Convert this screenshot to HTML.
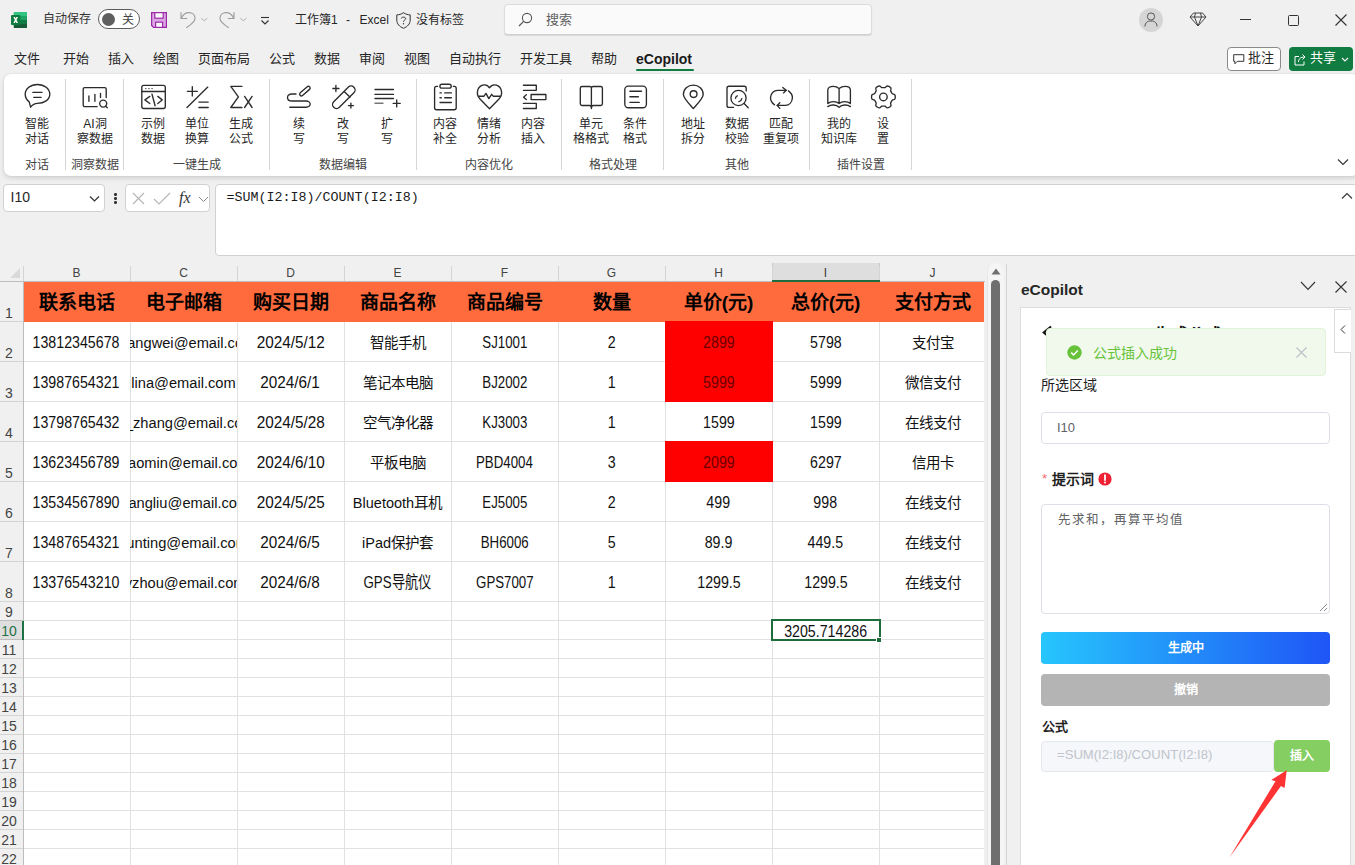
<!DOCTYPE html><html lang="zh-CN"><head><meta charset="utf-8"><title>Excel</title><style>
*{margin:0;padding:0;box-sizing:border-box}
html,body{width:1355px;height:865px;overflow:hidden;background:#f0f0f0;font-family:"Liberation Sans",sans-serif;color:#262626}
.ab{position:absolute}
.t{position:absolute;white-space:nowrap;line-height:1}
svg{position:absolute;overflow:visible}
.menu{position:absolute;top:52px;font-size:13px;line-height:14px;color:#262626;white-space:nowrap}
.rb{position:absolute;top:0;width:44px;text-align:center}
.rl{position:absolute;top:116.5px;width:60px;font-size:12px;line-height:15px;color:#262626;text-align:center;white-space:nowrap}
.gl{position:absolute;top:158.5px;font-size:12px;line-height:13px;color:#444;text-align:center;white-space:nowrap}
.sep{position:absolute;top:79px;width:1px;height:91px;background:#d6d6d6}
.ch{position:absolute;top:265px;height:16px;font-size:12px;line-height:16px;color:#444;text-align:center}
.chs{position:absolute;top:266px;width:1px;height:15px;background:#d4d4d4}
.rh{position:absolute;left:0;width:23px;font-size:14px;color:#444;text-align:center;line-height:14px}
.cell{position:absolute;display:flex;justify-content:center;white-space:nowrap;overflow:hidden;font-size:14.67px;color:#111}
.num,.dt,.cd{font-size:17px}
.cell span{display:inline-block;transform:scaleX(0.835)}
.dt span{transform:scaleX(0.9)}
.cd span{transform:scaleX(0.78)}
.hd{position:absolute;text-align:center;white-space:nowrap;font-size:19px;font-weight:bold;color:#000;line-height:41.5px;top:281.5px;height:40px}
</style></head><body>
<svg style="left:11px;top:12px" width="16" height="16" viewBox="0 0 17 16" preserveAspectRatio="none">
<rect x="3" y="0" width="14" height="16" rx="1" fill="#21a366"/>
<rect x="3" y="0" width="14" height="4" fill="#33c481"/>
<rect x="3" y="8" width="14" height="4" fill="#107c41"/>
<rect x="3" y="12" width="14" height="4" rx="0.5" fill="#185c37"/>
<rect x="0" y="3" width="10" height="10" rx="1" fill="#107c41"/>
<path d="M2.6 5 L4.2 5 L5 6.6 L5.8 5 L7.4 5 L5.9 8 L7.4 11 L5.8 11 L5 9.4 L4.2 11 L2.6 11 L4.1 8 Z" fill="#fff"/>
</svg>
<div class="t" style="left:43px;top:13px;font-size:12px;line-height:13px;color:#333">自动保存</div>
<div class="ab" style="left:98px;top:9px;width:42px;height:20px;border:1px solid #5c5c5c;border-radius:10px;background:#fff"></div>
<div class="ab" style="left:101.5px;top:12.5px;width:13px;height:13px;border-radius:50%;background:#5f5f5f"></div>
<div class="t" style="left:122px;top:13.5px;font-size:12px;line-height:13px;color:#444">关</div>
<svg style="left:151px;top:12px" width="16" height="16" viewBox="0 0 16 16">
<path d="M0.6 0.6 H15.4 V15.4 H2.6 L0.6 13.4 Z" fill="#dba6e3" stroke="#9c2aa8" stroke-width="1.2"/>
<rect x="3.8" y="0.6" width="8.4" height="5.6" fill="#f8f8f8" stroke="#9c2aa8" stroke-width="1.2"/>
<rect x="4.6" y="10.2" width="7" height="5.2" fill="#f8f8f8" stroke="#9c2aa8" stroke-width="1.2"/>
</svg>
<svg style="left:180px;top:12px" width="30" height="17" viewBox="0 0 30 17">
<path d="M1 0.3 V6.5 H7.2" stroke="#9c9c9c" stroke-width="1.1" fill="none"/>
<path d="M1.3 6.2 C3 2.5 6 0.6 9 0.6 C12.5 0.6 15 3 15 6.5 C15 9.5 12 12 6.3 15.8" stroke="#9c9c9c" stroke-width="1.1" fill="none"/>
<path d="M21.3 6.2 L24.3 8.8 L27.3 6.2" stroke="#b0b0b0" stroke-width="1" fill="none"/>
</svg>
<svg style="left:219px;top:12px" width="30" height="17" viewBox="0 0 30 17">
<path d="M15 0.3 V6.5 H8.8" stroke="#9c9c9c" stroke-width="1.1" fill="none"/>
<path d="M14.7 6.2 C13 2.5 10 0.6 7 0.6 C3.5 0.6 1 3 1 6.5 C1 9.5 4 12 9.7 15.8" stroke="#9c9c9c" stroke-width="1.1" fill="none"/>
<path d="M21.3 6.2 L24.3 8.8 L27.3 6.2" stroke="#b0b0b0" stroke-width="1" fill="none"/>
</svg>
<svg style="left:260px;top:16px" width="10" height="9" viewBox="0 0 10 9">
<path d="M1 1.5 H9" stroke="#333" stroke-width="1.1"/><path d="M1.5 4.5 L5 8 L8.5 4.5" stroke="#333" stroke-width="1.2" fill="none"/>
</svg>
<div class="t" style="left:295px;top:14px;font-size:12px;line-height:13px;color:#262626">工作簿1</div><div class="t" style="left:346px;top:14px;font-size:12px;line-height:13px;color:#262626">-</div><div class="t" style="left:359.5px;top:14px;font-size:12px;line-height:13px;color:#262626">Excel</div>
<svg style="left:396px;top:12px" width="15" height="17" viewBox="0 0 15 17">
<path d="M7.5 0.7 C5 2.3 3 2.8 0.8 2.9 V8 C0.8 12 3.5 14.6 7.5 16.3 C11.5 14.6 14.2 12 14.2 8 V2.9 C12 2.8 10 2.3 7.5 0.7 Z" fill="none" stroke="#333" stroke-width="1"/>
<path d="M5.3 6.3 C5.3 4.7 9.7 4.7 9.7 6.5 C9.7 8 7.5 8.1 7.5 9.8" fill="none" stroke="#333" stroke-width="1"/>
<circle cx="7.5" cy="11.8" r="0.7" fill="#333"/>
</svg>
<div class="t" style="left:416px;top:14px;font-size:12px;line-height:13px;color:#262626">没有标签</div>
<div class="ab" style="left:504.3px;top:4.3px;width:368px;height:31px;background:#fafafa;border:1px solid #dcdcdc;border-bottom-color:#cfcfcf;border-radius:4px;box-shadow:0 1px 1px rgba(0,0,0,0.10)"></div>
<svg style="left:518px;top:12px" width="15" height="15" viewBox="0 0 15 15">
<circle cx="9" cy="6" r="4.6" fill="none" stroke="#555" stroke-width="1.1"/><path d="M5.7 9.3 L1 14" stroke="#555" stroke-width="1.2"/>
</svg>
<div class="t" style="left:546px;top:12.5px;font-size:13px;line-height:14px;color:#616161">搜索</div>
<div class="ab" style="left:1139px;top:7.5px;width:24px;height:24px;border-radius:50%;background:#d5d5d5"></div>
<svg style="left:1143px;top:11px" width="16" height="17" viewBox="0 0 16 17">
<circle cx="8" cy="5.5" r="3.6" fill="none" stroke="#555" stroke-width="1"/>
<path d="M2 15.5 C2 11.5 4.5 10 8 10 C11.5 10 14 11.5 14 15.5" fill="none" stroke="#555" stroke-width="1"/>
</svg>
<svg style="left:1189px;top:12px" width="18" height="15" viewBox="0 0 18 15">
<path d="M4.5 1 H13.5 L17 5 L9 14 L1 5 Z M1 5 H17 M6.5 1 L5.5 5 L9 14 L12.5 5 L11.5 1" fill="none" stroke="#444" stroke-width="1"/>
</svg>
<div class="ab" style="left:1240px;top:19px;width:11px;height:1px;background:#333"></div>
<div class="ab" style="left:1288px;top:14.5px;width:11px;height:11px;border:1px solid #333;border-radius:1.5px"></div>
<svg style="left:1335px;top:14px" width="12" height="12" viewBox="0 0 12 12"><path d="M0.5 0.5 L11.5 11.5 M11.5 0.5 L0.5 11.5" stroke="#333" stroke-width="1.1"/></svg>
<div class="menu" style="left:14px">文件</div>
<div class="menu" style="left:63px">开始</div>
<div class="menu" style="left:108px">插入</div>
<div class="menu" style="left:153px">绘图</div>
<div class="menu" style="left:198px">页面布局</div>
<div class="menu" style="left:269px">公式</div>
<div class="menu" style="left:314px">数据</div>
<div class="menu" style="left:359px">审阅</div>
<div class="menu" style="left:404px">视图</div>
<div class="menu" style="left:449px">自动执行</div>
<div class="menu" style="left:520px">开发工具</div>
<div class="menu" style="left:591px">帮助</div>
<div class="menu" style="left:636px;font-weight:bold;font-size:14px;color:#1a1a1a">eCopilot</div>
<div class="ab" style="left:636px;top:68.5px;width:58px;height:2.5px;background:#107c41;border-radius:1px"></div>
<div class="ab" style="left:1227px;top:47px;width:54px;height:24px;border:1px solid #8a8a8a;border-radius:4px;background:#fff"></div>
<svg style="left:1232.5px;top:54px" width="12" height="11" viewBox="0 0 12 11"><path d="M0.7 0.7 H10.8 V7.3 H4.3 L1.9 9.8 V7.3 H0.7 Z" fill="none" stroke="#333" stroke-width="1"/></svg>
<div class="t" style="left:1248px;top:51px;font-size:13px;line-height:14px;color:#262626">批注</div>
<div class="ab" style="left:1289px;top:47px;width:64px;height:24px;border-radius:4px;background:#107c41"></div>
<svg style="left:1294px;top:53px" width="13" height="13" viewBox="0 0 13 13"><path d="M5 3.5 H1 V12 H10 V8.5" fill="none" stroke="#fff" stroke-width="1"/><path d="M4.5 9 C4.5 5.5 7 4 10.5 4 M8.5 1.5 L11 4 L8.5 6.5" fill="none" stroke="#fff" stroke-width="1"/></svg>
<div class="t" style="left:1310px;top:51px;font-size:13px;line-height:14px;color:#fff">共享</div>
<svg style="left:1341px;top:57px" width="8" height="5" viewBox="0 0 8 5"><path d="M1 1 L4 4 L7 1" fill="none" stroke="#fff" stroke-width="1.1"/></svg>
<div class="ab" style="left:3.8px;top:73.5px;width:1355px;height:102.8px;background:#fff;border-radius:7px;box-shadow:0 2px 5px rgba(0,0,0,0.14),0 0 1.5px rgba(0,0,0,0.10)"></div>
<div class="sep" style="left:65.2px"></div>
<div class="sep" style="left:123.2px"></div>
<div class="sep" style="left:268.9px"></div>
<div class="sep" style="left:415.5px"></div>
<div class="sep" style="left:561.0px"></div>
<div class="sep" style="left:663.1px"></div>
<div class="sep" style="left:809.2px"></div>
<div class="sep" style="left:910.7px"></div>
<svg style="left:24.5px;top:84px" width="25" height="25" viewBox="0 0 25 25"><path d="M4.2 17.9 C1.5 15.8 0.2 13.3 0.2 10.3 C0.2 4.8 5.6 0.5 12.4 0.5 C19.2 0.5 24.8 4.8 24.8 10.3 C24.8 15.8 19.2 19.4 12.4 19.4 C9.5 19.5 7.5 20.8 5.6 23.2 Z" fill="none" stroke="#2b2b2b" stroke-width="1.35" stroke-linecap="round" stroke-linejoin="round"/><path d="M7.8 8.3 H17.1 M8.8 13.4 H16.1" fill="none" stroke="#2b2b2b" stroke-width="1.35" stroke-linecap="round" stroke-linejoin="round"/></svg>
<div class="rl" style="left:7px">智能<br>对话</div>
<svg style="left:82.5px;top:84px" width="25" height="25" viewBox="0 0 25 25"><path d="M14.2 22.6 H1.7 C0.9 22.6 0.2 21.9 0.2 21.1 V5.1 C0.2 4.3 0.9 3.6 1.7 3.6 H21.7 C22.5 3.6 23.2 4.3 23.2 5.1 V13.6" fill="none" stroke="#2b2b2b" stroke-width="1.35" stroke-linecap="round" stroke-linejoin="round"/><path d="M5.9 12 V17.2 M11.9 10.3 V17.2 M17.5 9.3 V13.6" fill="none" stroke="#2b2b2b" stroke-width="1.35" stroke-linecap="round" stroke-linejoin="round"/><circle cx="20.2" cy="19.6" r="3.5" fill="none" stroke="#2b2b2b" stroke-width="1.35" stroke-linecap="round" stroke-linejoin="round"/><path d="M22.8 22.2 L24.3 23.7" fill="none" stroke="#2b2b2b" stroke-width="1.35" stroke-linecap="round" stroke-linejoin="round"/></svg>
<div class="rl" style="left:65px">AI洞<br>察数据</div>
<svg style="left:140.5px;top:84px" width="25" height="25" viewBox="0 0 25 25"><rect x="0.8" y="1.3" width="23.5" height="23.2" rx="2" fill="none" stroke="#2b2b2b" stroke-width="1.35" stroke-linecap="round" stroke-linejoin="round"/><path d="M0.8 7.5 H24.3" fill="none" stroke="#2b2b2b" stroke-width="1.35" stroke-linecap="round" stroke-linejoin="round"/><path d="M4.8 4.6 H4.9 M7.9 4.6 H8 M11 4.6 H11.1" fill="none" stroke="#2b2b2b" stroke-width="1.35" stroke-linecap="round" stroke-linejoin="round"/><path d="M8.8 12.4 L3.9 15.9 L8.8 19.5 M16.8 12.4 L21.2 15.9 L16.8 19.5 M11 10.2 L14.1 21.7" fill="none" stroke="#2b2b2b" stroke-width="1.35" stroke-linecap="round" stroke-linejoin="round"/></svg>
<div class="rl" style="left:123px">示例<br>数据</div>
<svg style="left:184.5px;top:84px" width="25" height="25" viewBox="0 0 25 25"><path d="M2 23.5 L22.8 3.1" fill="none" stroke="#2b2b2b" stroke-width="1.35" stroke-linecap="round" stroke-linejoin="round"/><path d="M2.4 7.3 H12.4 M7.3 2.6 V11.9" fill="none" stroke="#2b2b2b" stroke-width="1.35" stroke-linecap="round" stroke-linejoin="round"/><path d="M13.9 18.1 H23.2 M13.9 23.5 H23.2" fill="none" stroke="#2b2b2b" stroke-width="1.35" stroke-linecap="round" stroke-linejoin="round"/></svg>
<div class="rl" style="left:167px">单位<br>换算</div>
<svg style="left:228.5px;top:84px" width="25" height="25" viewBox="0 0 25 25"><path d="M12.9 2.4 H1.8 L9.4 12.8 L1.8 23.5 H12.9" fill="none" stroke="#2b2b2b" stroke-width="1.35" stroke-linecap="round" stroke-linejoin="round"/><path d="M15.6 12.4 L23.1 23.5 M23.1 12.4 L15.6 23.5" fill="none" stroke="#2b2b2b" stroke-width="1.35" stroke-linecap="round" stroke-linejoin="round"/></svg>
<div class="rl" style="left:211px">生成<br>公式</div>
<svg style="left:286.5px;top:84px" width="25" height="25" viewBox="0 0 25 25"><rect x="-1.75" y="-6.4" width="3.5" height="12.8" rx="1.75" transform="translate(17.9 7.1) rotate(49)" fill="none" stroke="#2b2b2b" stroke-width="1.35" stroke-linecap="round" stroke-linejoin="round"/><path d="M9 10 H5 C2 10 0.5 11.5 0.5 13.5 C0.5 15.5 2 17 5 17 H19.2 C21.5 17 23.2 18.5 23.2 20.1 C23.2 21.7 21.5 23.2 19.2 23.2 H2.8" fill="none" stroke="#2b2b2b" stroke-width="1.35" stroke-linecap="round" stroke-linejoin="round"/></svg>
<div class="rl" style="left:269px">续<br>写</div>
<svg style="left:330.5px;top:84px" width="25" height="25" viewBox="0 0 25 25"><rect x="-14.25" y="-4" width="28.5" height="8" rx="4" transform="translate(12.8 13.25) rotate(-45)" fill="none" stroke="#2b2b2b" stroke-width="1.35" stroke-linecap="round" stroke-linejoin="round"/><path d="M13.3 7.7 L19 13" fill="none" stroke="#2b2b2b" stroke-width="1.35" stroke-linecap="round" stroke-linejoin="round"/><path d="M1.9 4.5 H7.9 M4.9 1.5 V7.5" fill="none" stroke="#2b2b2b" stroke-width="1.35" stroke-linecap="round" stroke-linejoin="round"/><path d="M17.4 21.6 H22.4 M19.9 19.1 V24.1" fill="none" stroke="#2b2b2b" stroke-width="1.35" stroke-linecap="round" stroke-linejoin="round"/></svg>
<div class="rl" style="left:313px">改<br>写</div>
<svg style="left:374.5px;top:84px" width="25" height="25" viewBox="0 0 25 25"><path d="M0 5.5 H18.5 M0 10.4 H18.5 M0 14.5 H18.5" fill="none" stroke="#2b2b2b" stroke-width="1.35" stroke-linecap="round" stroke-linejoin="round"/><path d="M0 19.2 H8" fill="none" stroke="#777" stroke-width="1.35" stroke-linecap="round"/><path d="M18.2 19.4 H25.2 M21.7 15.9 V22.9" fill="none" stroke="#2b2b2b" stroke-width="1.35" stroke-linecap="round" stroke-linejoin="round"/></svg>
<div class="rl" style="left:357px">扩<br>写</div>
<svg style="left:432.5px;top:84px" width="25" height="25" viewBox="0 0 25 25"><path d="M4.5 2.4 H3.6 C2.5 2.4 1.6 3.3 1.6 4.4 V23.7 C1.6 24.8 2.5 25.7 3.6 25.7 H21.2 C22.3 25.7 23.2 24.8 23.2 23.7 V4.4 C23.2 3.3 22.3 2.4 21.2 2.4 H20.3" fill="none" stroke="#2b2b2b" stroke-width="1.35" stroke-linecap="round" stroke-linejoin="round"/><rect x="6.9" y="0.2" width="11.3" height="3.9" rx="1.95" fill="none" stroke="#2b2b2b" stroke-width="1.35" stroke-linecap="round" stroke-linejoin="round"/><path d="M7 8.9 H8.3 M11.7 8.9 H18.4 M7 13.7 H8.3 M11.7 13.7 H18.4 M7 18.5 H18.4" fill="none" stroke="#2b2b2b" stroke-width="1.35" stroke-linecap="round" stroke-linejoin="round"/></svg>
<div class="rl" style="left:415px">内容<br>补全</div>
<svg style="left:476.5px;top:84px" width="25" height="25" viewBox="0 0 25 25"><path d="M12.5 24.7 L3 15 C-1 11 -0.5 3.5 5.5 1.2 C8.5 0.2 11 1.5 12.5 3.8 C14 1.5 16.5 0.2 19.5 1.2 C25.5 3.5 26 11 22 15 Z" fill="none" stroke="#2b2b2b" stroke-width="1.35" stroke-linecap="round" stroke-linejoin="round"/><path d="M1.8 12.2 H7 L9 9.4 L11.8 14.6 L14.7 10.3 L16.2 12.2 H23.4" fill="none" stroke="#2b2b2b" stroke-width="1.35" stroke-linecap="round" stroke-linejoin="round"/></svg>
<div class="rl" style="left:459px">情绪<br>分析</div>
<svg style="left:520.5px;top:84px" width="25" height="25" viewBox="0 0 25 25"><path d="M2.4 1.2 H15.3 V6.3 H2.4 M2.4 19.4 H15.3 V24.5 H2.4" fill="none" stroke="#2b2b2b" stroke-width="1.35" stroke-linecap="round" stroke-linejoin="round"/><rect x="10.1" y="10.5" width="14.8" height="5.1" fill="none" stroke="#2b2b2b" stroke-width="1.35" stroke-linecap="round" stroke-linejoin="round"/><path d="M5.3 10.8 L2.6 13.2 L5.3 15.6" fill="none" stroke="#2b2b2b" stroke-width="1.35" stroke-linecap="round" stroke-linejoin="round"/></svg>
<div class="rl" style="left:503px">内容<br>插入</div>
<svg style="left:578.5px;top:84px" width="25" height="25" viewBox="0 0 25 25"><path d="M12.4 4 C12.4 3.2 11.6 2.5 10.8 2.5 H3 C2.1 2.5 1.3 3.3 1.3 4.2 V19.8 C1.3 20.7 2.1 21.5 3 21.5 H10.6 C11.6 21.5 12.4 22.5 12.4 24.6 C12.4 22.5 13.2 21.5 14.2 21.5 H21.7 C22.6 21.5 23.4 20.7 23.4 19.8 V4.2 C23.4 3.3 22.6 2.5 21.7 2.5 H14 C13.2 2.5 12.4 3.2 12.4 4 Z M12.4 4 V24" fill="none" stroke="#2b2b2b" stroke-width="1.35" stroke-linecap="round" stroke-linejoin="round"/></svg>
<div class="rl" style="left:561px">单元<br>格格式</div>
<svg style="left:622.5px;top:84px" width="25" height="25" viewBox="0 0 25 25"><rect x="1.8" y="2.1" width="21.6" height="21.6" rx="3.5" fill="none" stroke="#2b2b2b" stroke-width="1.35" stroke-linecap="round" stroke-linejoin="round"/><path d="M6.9 7.2 H18.5 M6.9 12.7 H15.4 M6.9 18.3 H16.3" fill="none" stroke="#2b2b2b" stroke-width="1.35" stroke-linecap="round" stroke-linejoin="round"/></svg>
<div class="rl" style="left:605px">条件<br>格式</div>
<svg style="left:680.5px;top:84px" width="25" height="25" viewBox="0 0 25 25"><path d="M12.3 24.6 C6 17.5 2.4 14 2.4 10.5 C2.4 4.8 6.8 1.1 12.3 1.1 C17.8 1.1 22.2 4.8 22.2 10.5 C22.2 14 18.6 17.5 12.3 24.6 Z" fill="none" stroke="#2b2b2b" stroke-width="1.35" stroke-linecap="round" stroke-linejoin="round"/><circle cx="12.6" cy="10.1" r="3.4" fill="none" stroke="#2b2b2b" stroke-width="1.35" stroke-linecap="round" stroke-linejoin="round"/></svg>
<div class="rl" style="left:663px">地址<br>拆分</div>
<svg style="left:724.5px;top:84px" width="25" height="25" viewBox="0 0 25 25"><path d="M8.5 23.4 H4 C2.8 23.4 2 22.6 2 21.4 V4.2 C2 3 2.8 2.2 4 2.2 H19.2 C20.4 2.2 21.2 3 21.2 4.2 V6.9" fill="none" stroke="#2b2b2b" stroke-width="1.35" stroke-linecap="round" stroke-linejoin="round"/><circle cx="13.5" cy="14" r="7.6" fill="none" stroke="#2b2b2b" stroke-width="1.35" stroke-linecap="round" stroke-linejoin="round"/><path d="M10.5 14.3 C10.6 13 11.3 12.2 12.3 11.8 M16.8 14.6 C16.5 16.3 15.5 17.3 13.9 17.6" fill="none" stroke="#2b2b2b" stroke-width="1.35" stroke-linecap="round" stroke-linejoin="round"/><path d="M19.1 19.6 L23.2 23.7" fill="none" stroke="#2b2b2b" stroke-width="1.35" stroke-linecap="round" stroke-linejoin="round"/></svg>
<div class="rl" style="left:707px">数据<br>校验</div>
<svg style="left:768.5px;top:84px" width="25" height="25" viewBox="0 0 25 25"><path d="M5.5 20.8 C2.5 18.5 1.2 15.5 1.6 13 C2 9 5 6.3 8.5 6.3 H17.2" fill="none" stroke="#2b2b2b" stroke-width="1.35" stroke-linecap="round" stroke-linejoin="round"/><path d="M13.8 3.4 L17.2 6.3 L14.5 8.9" fill="none" stroke="#2b2b2b" stroke-width="1.35" stroke-linecap="round" stroke-linejoin="round"/><path d="M19.4 6.9 C22.5 9 23.5 12 23.4 14 C23 18.5 20 21.4 16.4 21.4 H8.2" fill="none" stroke="#2b2b2b" stroke-width="1.35" stroke-linecap="round" stroke-linejoin="round"/><path d="M10.8 18.8 L8.2 21.4 L10.8 24.4" fill="none" stroke="#2b2b2b" stroke-width="1.35" stroke-linecap="round" stroke-linejoin="round"/></svg>
<div class="rl" style="left:751px">匹配<br>重复项</div>
<svg style="left:826.5px;top:84px" width="25" height="25" viewBox="0 0 25 25"><path d="M0.8 19.6 V6 C0.8 3.5 3 2.3 6.3 2.3 C9.5 2.3 11 3.6 12.1 4.6 C13.2 3.6 14.7 2.3 18 2.3 C21.2 2.3 23.4 3.5 23.4 6 V19.6 C20.5 17 15 17 12.1 19.6 C9.2 17 3.7 17 0.8 19.6 Z M12.1 4.6 V19.6" fill="none" stroke="#2b2b2b" stroke-width="1.35" stroke-linecap="round" stroke-linejoin="round"/><path d="M0.8 22.6 C3.7 20.4 9.2 20.4 12.1 23.2 C15 20.4 20.5 20.4 23.4 22.6" fill="none" stroke="#2b2b2b" stroke-width="1.35" stroke-linecap="round" stroke-linejoin="round"/></svg>
<div class="rl" style="left:809px">我的<br>知识库</div>
<svg style="left:870.5px;top:84px" width="25" height="25" viewBox="0 0 25 25"><path d="M24.25 12.90 L24.23 13.52 L24.14 14.13 L23.95 14.73 L23.49 15.26 L22.59 15.63 L21.68 15.92 L21.18 16.27 L20.89 16.68 L20.65 17.10 L20.41 17.52 L20.16 17.94 L19.92 18.36 L19.71 18.82 L19.65 19.43 L19.86 20.36 L19.99 21.33 L19.76 21.99 L19.34 22.45 L18.85 22.83 L18.33 23.16 L17.78 23.45 L17.20 23.69 L16.59 23.82 L15.90 23.68 L15.13 23.09 L14.43 22.45 L13.87 22.19 L13.37 22.14 L12.88 22.14 L12.40 22.15 L11.92 22.14 L11.43 22.14 L10.93 22.19 L10.37 22.45 L9.67 23.09 L8.90 23.68 L8.21 23.82 L7.60 23.69 L7.02 23.45 L6.48 23.16 L5.95 22.83 L5.46 22.45 L5.04 21.99 L4.81 21.33 L4.94 20.36 L5.15 19.43 L5.09 18.82 L4.88 18.36 L4.64 17.94 L4.39 17.52 L4.15 17.10 L3.91 16.68 L3.62 16.27 L3.12 15.92 L2.21 15.63 L1.31 15.26 L0.85 14.73 L0.66 14.13 L0.57 13.52 L0.55 12.90 L0.57 12.28 L0.66 11.67 L0.85 11.07 L1.31 10.54 L2.21 10.17 L3.12 9.88 L3.62 9.53 L3.91 9.12 L4.15 8.70 L4.39 8.28 L4.64 7.86 L4.88 7.44 L5.09 6.98 L5.15 6.37 L4.94 5.44 L4.81 4.47 L5.04 3.81 L5.46 3.35 L5.95 2.97 L6.47 2.64 L7.02 2.35 L7.60 2.11 L8.21 1.98 L8.90 2.12 L9.67 2.71 L10.37 3.35 L10.93 3.61 L11.43 3.66 L11.92 3.66 L12.40 3.65 L12.88 3.66 L13.37 3.66 L13.87 3.61 L14.43 3.35 L15.13 2.71 L15.90 2.12 L16.59 1.98 L17.20 2.11 L17.78 2.35 L18.33 2.64 L18.85 2.97 L19.34 3.35 L19.76 3.81 L19.99 4.47 L19.86 5.44 L19.65 6.37 L19.71 6.98 L19.92 7.44 L20.16 7.86 L20.41 8.28 L20.65 8.70 L20.89 9.12 L21.18 9.53 L21.68 9.88 L22.59 10.17 L23.49 10.54 L23.95 11.07 L24.14 11.67 L24.23 12.28 L24.25 12.90 Z" fill="none" stroke="#2b2b2b" stroke-width="1.35" stroke-linecap="round" stroke-linejoin="round"/><circle cx="12.4" cy="12.9" r="3.8" fill="none" stroke="#2b2b2b" stroke-width="1.35" stroke-linecap="round" stroke-linejoin="round"/></svg>
<div class="rl" style="left:853px">设<br>置</div>
<div class="gl" style="left:-3px;width:80px">对话</div>
<div class="gl" style="left:55px;width:80px">洞察数据</div>
<div class="gl" style="left:157px;width:80px">一键生成</div>
<div class="gl" style="left:303px;width:80px">数据编辑</div>
<div class="gl" style="left:449px;width:80px">内容优化</div>
<div class="gl" style="left:573px;width:80px">格式处理</div>
<div class="gl" style="left:697px;width:80px">其他</div>
<div class="gl" style="left:821px;width:80px">插件设置</div>
<svg style="left:1337px;top:158px" width="12" height="8" viewBox="0 0 12 8"><path d="M1 1.5 L6 6.5 L11 1.5" fill="none" stroke="#333" stroke-width="1.1"/></svg>
<div class="ab" style="left:3px;top:184px;width:101.5px;height:27.5px;background:#fff;border:1px solid #d1d1d1;border-radius:4px"></div>
<div class="t" style="left:10.5px;top:190px;font-size:14px;line-height:14px;color:#262626">I10</div>
<svg style="left:89px;top:195px" width="12" height="8" viewBox="0 0 12 8"><path d="M1 1.5 L5.5 6 L10 1.5" fill="none" stroke="#333" stroke-width="1.2"/></svg>
<div class="ab" style="left:114px;top:193px;width:2.5px;height:2.5px;border-radius:50%;background:#333"></div>
<div class="ab" style="left:114px;top:197px;width:2.5px;height:2.5px;border-radius:50%;background:#333"></div>
<div class="ab" style="left:114px;top:201px;width:2.5px;height:2.5px;border-radius:50%;background:#333"></div>
<div class="ab" style="left:124.8px;top:184px;width:85.7px;height:27.5px;background:#fff;border:1px solid #d1d1d1;border-radius:4px"></div>
<svg style="left:132px;top:192px" width="13" height="13" viewBox="0 0 13 13"><path d="M1 1 L12 12 M12 1 L1 12" stroke="#b5b5b5" stroke-width="1.1"/></svg>
<svg style="left:153px;top:192px" width="18" height="13" viewBox="0 0 18 13"><path d="M1 7 L6 12 L17 1" fill="none" stroke="#b5b5b5" stroke-width="1.1"/></svg>
<div class="t" style="left:179px;top:190px;font-family:'Liberation Serif',serif;font-style:italic;font-size:16px;line-height:16px;color:#333">fx</div>
<svg style="left:198px;top:196px" width="11" height="7" viewBox="0 0 11 7"><path d="M1 1 L5.5 5.5 L10 1" fill="none" stroke="#888" stroke-width="1"/></svg>
<div class="ab" style="left:215px;top:184px;width:1150px;height:72px;background:#fff;border:1px solid #d1d1d1;border-radius:4px 0 0 4px"></div>
<div class="t" style="left:226.5px;top:191px;font-family:'Liberation Mono',monospace;font-size:13.35px;line-height:14px;color:#1a1a1a">=SUM(I2:I8)/COUNT(I2:I8)</div>
<svg style="left:1341px;top:192px" width="12" height="8" viewBox="0 0 12 8"><path d="M1 6.5 L6 1.5 L11 6.5" fill="none" stroke="#333" stroke-width="1.1"/></svg>
<div class="ab" style="left:0;top:256px;width:1006px;height:609px;background:#f0f0f0"></div>
<svg style="left:9px;top:267px" width="12" height="12" viewBox="0 0 12 12"><path d="M11 1 V11 H1 Z" fill="#d9d9d9"/></svg>
<div class="ab" style="left:771.5px;top:263px;width:108.5px;height:18.5px;background:#dedede;border-left:1px solid #c8c8c8;border-right:1px solid #c8c8c8"></div>
<div class="ch" style="left:23px;width:107px;color:#444">B</div>
<div class="ch" style="left:130px;width:107px;color:#444">C</div>
<div class="ch" style="left:237px;width:107px;color:#444">D</div>
<div class="ch" style="left:344px;width:107px;color:#444">E</div>
<div class="ch" style="left:451px;width:107px;color:#444">F</div>
<div class="ch" style="left:558px;width:107px;color:#444">G</div>
<div class="ch" style="left:665px;width:107px;color:#444">H</div>
<div class="ch" style="left:772px;width:107px;color:#3a3a3a">I</div>
<div class="ch" style="left:879px;width:107px;color:#444">J</div>
<div class="chs" style="left:23px"></div>
<div class="chs" style="left:130px"></div>
<div class="chs" style="left:237px"></div>
<div class="chs" style="left:344px"></div>
<div class="chs" style="left:451px"></div>
<div class="chs" style="left:558px"></div>
<div class="chs" style="left:665px"></div>
<div class="chs" style="left:772px"></div>
<div class="chs" style="left:879px"></div>
<div class="ab" style="left:0;top:281px;width:985px;height:1px;background:#bdbdbd"></div>
<div class="ab" style="left:23.5px;top:281.5px;width:960.8px;height:600px;background:#fff"></div>
<div class="ab" style="left:0;top:321.0px;width:984.3px;height:1px;background:#e1e1e1"></div>
<div class="ab" style="left:0;top:361.0px;width:984.3px;height:1px;background:#e1e1e1"></div>
<div class="ab" style="left:0;top:401.0px;width:984.3px;height:1px;background:#e1e1e1"></div>
<div class="ab" style="left:0;top:441.0px;width:984.3px;height:1px;background:#e1e1e1"></div>
<div class="ab" style="left:0;top:481.0px;width:984.3px;height:1px;background:#e1e1e1"></div>
<div class="ab" style="left:0;top:521.0px;width:984.3px;height:1px;background:#e1e1e1"></div>
<div class="ab" style="left:0;top:561.0px;width:984.3px;height:1px;background:#e1e1e1"></div>
<div class="ab" style="left:0;top:601.0px;width:984.3px;height:1px;background:#e1e1e1"></div>
<div class="ab" style="left:0;top:620.0px;width:984.3px;height:1px;background:#e1e1e1"></div>
<div class="ab" style="left:0;top:639.0px;width:984.3px;height:1px;background:#e1e1e1"></div>
<div class="ab" style="left:0;top:658.0px;width:984.3px;height:1px;background:#e1e1e1"></div>
<div class="ab" style="left:0;top:677.0px;width:984.3px;height:1px;background:#e1e1e1"></div>
<div class="ab" style="left:0;top:696.0px;width:984.3px;height:1px;background:#e1e1e1"></div>
<div class="ab" style="left:0;top:715.0px;width:984.3px;height:1px;background:#e1e1e1"></div>
<div class="ab" style="left:0;top:734.0px;width:984.3px;height:1px;background:#e1e1e1"></div>
<div class="ab" style="left:0;top:753.0px;width:984.3px;height:1px;background:#e1e1e1"></div>
<div class="ab" style="left:0;top:772.0px;width:984.3px;height:1px;background:#e1e1e1"></div>
<div class="ab" style="left:0;top:791.0px;width:984.3px;height:1px;background:#e1e1e1"></div>
<div class="ab" style="left:0;top:810.0px;width:984.3px;height:1px;background:#e1e1e1"></div>
<div class="ab" style="left:0;top:829.0px;width:984.3px;height:1px;background:#e1e1e1"></div>
<div class="ab" style="left:0;top:848.0px;width:984.3px;height:1px;background:#e1e1e1"></div>
<div class="ab" style="left:0;top:867.0px;width:984.3px;height:1px;background:#e1e1e1"></div>
<div class="ab" style="left:0;top:886.0px;width:984.3px;height:1px;background:#e1e1e1"></div>
<div class="ab" style="left:0;top:321.0px;width:23px;height:1px;background:#d4d4d4"></div>
<div class="ab" style="left:0;top:361.0px;width:23px;height:1px;background:#d4d4d4"></div>
<div class="ab" style="left:0;top:401.0px;width:23px;height:1px;background:#d4d4d4"></div>
<div class="ab" style="left:0;top:441.0px;width:23px;height:1px;background:#d4d4d4"></div>
<div class="ab" style="left:0;top:481.0px;width:23px;height:1px;background:#d4d4d4"></div>
<div class="ab" style="left:0;top:521.0px;width:23px;height:1px;background:#d4d4d4"></div>
<div class="ab" style="left:0;top:561.0px;width:23px;height:1px;background:#d4d4d4"></div>
<div class="ab" style="left:0;top:601.0px;width:23px;height:1px;background:#d4d4d4"></div>
<div class="ab" style="left:0;top:620.0px;width:23px;height:1px;background:#d4d4d4"></div>
<div class="ab" style="left:0;top:639.0px;width:23px;height:1px;background:#d4d4d4"></div>
<div class="ab" style="left:0;top:658.0px;width:23px;height:1px;background:#d4d4d4"></div>
<div class="ab" style="left:0;top:677.0px;width:23px;height:1px;background:#d4d4d4"></div>
<div class="ab" style="left:0;top:696.0px;width:23px;height:1px;background:#d4d4d4"></div>
<div class="ab" style="left:0;top:715.0px;width:23px;height:1px;background:#d4d4d4"></div>
<div class="ab" style="left:0;top:734.0px;width:23px;height:1px;background:#d4d4d4"></div>
<div class="ab" style="left:0;top:753.0px;width:23px;height:1px;background:#d4d4d4"></div>
<div class="ab" style="left:0;top:772.0px;width:23px;height:1px;background:#d4d4d4"></div>
<div class="ab" style="left:0;top:791.0px;width:23px;height:1px;background:#d4d4d4"></div>
<div class="ab" style="left:0;top:810.0px;width:23px;height:1px;background:#d4d4d4"></div>
<div class="ab" style="left:0;top:829.0px;width:23px;height:1px;background:#d4d4d4"></div>
<div class="ab" style="left:0;top:848.0px;width:23px;height:1px;background:#d4d4d4"></div>
<div class="ab" style="left:0;top:867.0px;width:23px;height:1px;background:#d4d4d4"></div>
<div class="ab" style="left:0;top:886.0px;width:23px;height:1px;background:#d4d4d4"></div>
<div class="ab" style="left:129.5px;top:321.5px;width:1px;height:544px;background:#e1e1e1"></div>
<div class="ab" style="left:236.5px;top:321.5px;width:1px;height:544px;background:#e1e1e1"></div>
<div class="ab" style="left:343.5px;top:321.5px;width:1px;height:544px;background:#e1e1e1"></div>
<div class="ab" style="left:450.5px;top:321.5px;width:1px;height:544px;background:#e1e1e1"></div>
<div class="ab" style="left:557.5px;top:321.5px;width:1px;height:544px;background:#e1e1e1"></div>
<div class="ab" style="left:664.5px;top:321.5px;width:1px;height:544px;background:#e1e1e1"></div>
<div class="ab" style="left:771.5px;top:321.5px;width:1px;height:544px;background:#e1e1e1"></div>
<div class="ab" style="left:878.5px;top:321.5px;width:1px;height:544px;background:#e1e1e1"></div>
<div class="ab" style="left:23px;top:281.5px;width:1px;height:584px;background:#bdbdbd"></div>
<div class="ab" style="left:23.5px;top:281.5px;width:960.8px;height:40px;background:#ff6b3d"></div>
<div class="ab" style="left:771.5px;top:279.7px;width:108.5px;height:2.3px;background:#1e6b3c"></div>
<div class="hd" style="left:23px;width:107px">联系电话</div>
<div class="hd" style="left:130px;width:107px">电子邮箱</div>
<div class="hd" style="left:237px;width:107px">购买日期</div>
<div class="hd" style="left:344px;width:107px">商品名称</div>
<div class="hd" style="left:451px;width:107px">商品编号</div>
<div class="hd" style="left:558px;width:107px">数量</div>
<div class="hd" style="left:665px;width:107px">单价(元)</div>
<div class="hd" style="left:772px;width:107px">总价(元)</div>
<div class="hd" style="left:879px;width:107px">支付方式</div>
<div class="ab" style="left:665px;top:321.0px;width:108px;height:41.5px;background:#ff0000"></div>
<div class="ab" style="left:665px;top:361.0px;width:108px;height:40.5px;background:#ff0000"></div>
<div class="ab" style="left:665px;top:441.0px;width:108px;height:40.5px;background:#ff0000"></div>
<div class="cell num" style="left:23px;top:321.5px;width:107px;height:40px;line-height:42px;"><span>13812345678</span></div>
<div class="cell" style="left:130px;top:321.5px;width:107px;height:40px;line-height:42px;">zhangwei@email.com</div>
<div class="cell dt" style="left:237px;top:321.5px;width:107px;height:40px;line-height:42px;"><span>2024/5/12</span></div>
<div class="cell" style="left:344px;top:321.5px;width:107px;height:40px;line-height:42px;font-size:14.5px;">智能手机</div>
<div class="cell cd" style="left:451px;top:321.5px;width:107px;height:40px;line-height:42px;"><span>SJ1001</span></div>
<div class="cell num" style="left:558px;top:321.5px;width:107px;height:40px;line-height:42px;"><span>2</span></div>
<div class="cell num" style="left:665px;top:321.5px;width:107px;height:40px;line-height:42px;color:#6b0000;"><span>2899</span></div>
<div class="cell num" style="left:772px;top:321.5px;width:107px;height:40px;line-height:42px;"><span>5798</span></div>
<div class="cell" style="left:879px;top:321.5px;width:107px;height:40px;line-height:42px;font-size:14.5px;">支付宝</div>
<div class="cell num" style="left:23px;top:361.5px;width:107px;height:40px;line-height:42px;"><span>13987654321</span></div>
<div class="cell" style="left:130px;top:361.5px;width:107px;height:40px;line-height:42px;">lina@email.com</div>
<div class="cell dt" style="left:237px;top:361.5px;width:107px;height:40px;line-height:42px;"><span>2024/6/1</span></div>
<div class="cell" style="left:344px;top:361.5px;width:107px;height:40px;line-height:42px;font-size:14.5px;">笔记本电脑</div>
<div class="cell cd" style="left:451px;top:361.5px;width:107px;height:40px;line-height:42px;"><span>BJ2002</span></div>
<div class="cell num" style="left:558px;top:361.5px;width:107px;height:40px;line-height:42px;"><span>1</span></div>
<div class="cell num" style="left:665px;top:361.5px;width:107px;height:40px;line-height:42px;color:#6b0000;"><span>5999</span></div>
<div class="cell num" style="left:772px;top:361.5px;width:107px;height:40px;line-height:42px;"><span>5999</span></div>
<div class="cell" style="left:879px;top:361.5px;width:107px;height:40px;line-height:42px;font-size:14.5px;">微信支付</div>
<div class="cell num" style="left:23px;top:401.5px;width:107px;height:40px;line-height:42px;"><span>13798765432</span></div>
<div class="cell" style="left:130px;top:401.5px;width:107px;height:40px;line-height:42px;padding-left:6px;">li_zhang@email.com</div>
<div class="cell dt" style="left:237px;top:401.5px;width:107px;height:40px;line-height:42px;"><span>2024/5/28</span></div>
<div class="cell" style="left:344px;top:401.5px;width:107px;height:40px;line-height:42px;font-size:14.5px;">空气净化器</div>
<div class="cell cd" style="left:451px;top:401.5px;width:107px;height:40px;line-height:42px;"><span>KJ3003</span></div>
<div class="cell num" style="left:558px;top:401.5px;width:107px;height:40px;line-height:42px;"><span>1</span></div>
<div class="cell num" style="left:665px;top:401.5px;width:107px;height:40px;line-height:42px;"><span>1599</span></div>
<div class="cell num" style="left:772px;top:401.5px;width:107px;height:40px;line-height:42px;"><span>1599</span></div>
<div class="cell" style="left:879px;top:401.5px;width:107px;height:40px;line-height:42px;font-size:14.5px;">在线支付</div>
<div class="cell num" style="left:23px;top:441.5px;width:107px;height:40px;line-height:42px;"><span>13623456789</span></div>
<div class="cell" style="left:130px;top:441.5px;width:107px;height:40px;line-height:42px;">xiaomin@email.com</div>
<div class="cell dt" style="left:237px;top:441.5px;width:107px;height:40px;line-height:42px;"><span>2024/6/10</span></div>
<div class="cell" style="left:344px;top:441.5px;width:107px;height:40px;line-height:42px;font-size:14.5px;">平板电脑</div>
<div class="cell cd" style="left:451px;top:441.5px;width:107px;height:40px;line-height:42px;"><span>PBD4004</span></div>
<div class="cell num" style="left:558px;top:441.5px;width:107px;height:40px;line-height:42px;"><span>3</span></div>
<div class="cell num" style="left:665px;top:441.5px;width:107px;height:40px;line-height:42px;color:#6b0000;"><span>2099</span></div>
<div class="cell num" style="left:772px;top:441.5px;width:107px;height:40px;line-height:42px;"><span>6297</span></div>
<div class="cell" style="left:879px;top:441.5px;width:107px;height:40px;line-height:42px;font-size:14.5px;">信用卡</div>
<div class="cell num" style="left:23px;top:481.5px;width:107px;height:40px;line-height:42px;"><span>13534567890</span></div>
<div class="cell" style="left:130px;top:481.5px;width:107px;height:40px;line-height:42px;">wangliu@email.com</div>
<div class="cell dt" style="left:237px;top:481.5px;width:107px;height:40px;line-height:42px;"><span>2024/5/25</span></div>
<div class="cell" style="left:344px;top:481.5px;width:107px;height:40px;line-height:42px;font-size:14.5px;">Bluetooth耳机</div>
<div class="cell cd" style="left:451px;top:481.5px;width:107px;height:40px;line-height:42px;"><span>EJ5005</span></div>
<div class="cell num" style="left:558px;top:481.5px;width:107px;height:40px;line-height:42px;"><span>2</span></div>
<div class="cell num" style="left:665px;top:481.5px;width:107px;height:40px;line-height:42px;"><span>499</span></div>
<div class="cell num" style="left:772px;top:481.5px;width:107px;height:40px;line-height:42px;"><span>998</span></div>
<div class="cell" style="left:879px;top:481.5px;width:107px;height:40px;line-height:42px;font-size:14.5px;">在线支付</div>
<div class="cell num" style="left:23px;top:521.5px;width:107px;height:40px;line-height:42px;"><span>13487654321</span></div>
<div class="cell" style="left:130px;top:521.5px;width:107px;height:40px;line-height:42px;">yunting@email.com</div>
<div class="cell dt" style="left:237px;top:521.5px;width:107px;height:40px;line-height:42px;"><span>2024/6/5</span></div>
<div class="cell" style="left:344px;top:521.5px;width:107px;height:40px;line-height:42px;font-size:14.5px;">iPad保护套</div>
<div class="cell cd" style="left:451px;top:521.5px;width:107px;height:40px;line-height:42px;"><span>BH6006</span></div>
<div class="cell num" style="left:558px;top:521.5px;width:107px;height:40px;line-height:42px;"><span>5</span></div>
<div class="cell num" style="left:665px;top:521.5px;width:107px;height:40px;line-height:42px;"><span>89.9</span></div>
<div class="cell num" style="left:772px;top:521.5px;width:107px;height:40px;line-height:42px;"><span>449.5</span></div>
<div class="cell" style="left:879px;top:521.5px;width:107px;height:40px;line-height:42px;font-size:14.5px;">在线支付</div>
<div class="cell num" style="left:23px;top:561.5px;width:107px;height:40px;line-height:42px;"><span>13376543210</span></div>
<div class="cell" style="left:130px;top:561.5px;width:107px;height:40px;line-height:42px;">lyzhou@email.com</div>
<div class="cell dt" style="left:237px;top:561.5px;width:107px;height:40px;line-height:42px;"><span>2024/6/8</span></div>
<div class="cell cd" style="left:344px;top:561.5px;width:107px;height:40px;line-height:42px;"><span>GPS导航仪</span></div>
<div class="cell cd" style="left:451px;top:561.5px;width:107px;height:40px;line-height:42px;"><span>GPS7007</span></div>
<div class="cell num" style="left:558px;top:561.5px;width:107px;height:40px;line-height:42px;"><span>1</span></div>
<div class="cell num" style="left:665px;top:561.5px;width:107px;height:40px;line-height:42px;"><span>1299.5</span></div>
<div class="cell num" style="left:772px;top:561.5px;width:107px;height:40px;line-height:42px;"><span>1299.5</span></div>
<div class="cell" style="left:879px;top:561.5px;width:107px;height:40px;line-height:42px;font-size:14.5px;">在线支付</div>
<div class="ab" style="left:0;top:620.0px;width:23px;height:20px;background:#dedede;border-top:1px solid #bdbdbd;border-bottom:1px solid #bdbdbd"></div>
<div class="rh" style="left:-2.5px;top:306.0px;color:#444">1</div>
<div class="rh" style="left:-2.5px;top:346.0px;color:#444">2</div>
<div class="rh" style="left:-2.5px;top:386.0px;color:#444">3</div>
<div class="rh" style="left:-2.5px;top:426.0px;color:#444">4</div>
<div class="rh" style="left:-2.5px;top:466.0px;color:#444">5</div>
<div class="rh" style="left:-2.5px;top:506.0px;color:#444">6</div>
<div class="rh" style="left:-2.5px;top:546.0px;color:#444">7</div>
<div class="rh" style="left:-2.5px;top:586.0px;color:#444">8</div>
<div class="rh" style="left:-2.5px;top:605.0px;color:#444">9</div>
<div class="rh" style="left:-2.5px;top:624.0px;color:#1e7145">10</div>
<div class="rh" style="left:-2.5px;top:643.0px;color:#444">11</div>
<div class="rh" style="left:-2.5px;top:662.0px;color:#444">12</div>
<div class="rh" style="left:-2.5px;top:681.0px;color:#444">13</div>
<div class="rh" style="left:-2.5px;top:700.0px;color:#444">14</div>
<div class="rh" style="left:-2.5px;top:719.0px;color:#444">15</div>
<div class="rh" style="left:-2.5px;top:738.0px;color:#444">16</div>
<div class="rh" style="left:-2.5px;top:757.0px;color:#444">17</div>
<div class="rh" style="left:-2.5px;top:776.0px;color:#444">18</div>
<div class="rh" style="left:-2.5px;top:795.0px;color:#444">19</div>
<div class="rh" style="left:-2.5px;top:814.0px;color:#444">20</div>
<div class="rh" style="left:-2.5px;top:833.0px;color:#444">21</div>
<div class="rh" style="left:-2.5px;top:852.0px;color:#444">22</div>
<div class="rh" style="left:-2.5px;top:871.0px;color:#444">23</div>
<div class="ab" style="left:21.5px;top:620.5px;width:2px;height:19px;background:#1e7145"></div>
<div class="ab" style="left:770.5px;top:618.5px;width:110px;height:22px;border:2px solid #1e6b3c"></div>
<div class="ab" style="left:876px;top:636.5px;width:6px;height:6px;background:#1e6b3c;border:1px solid #fff"></div>
<div class="cell num" style="left:772px;top:620.5px;width:107px;height:19px;line-height:21px"><span>3205.714286</span></div>
<div class="ab" style="left:986.5px;top:263px;width:17.5px;height:640px;background:#f5f5f5;border-radius:8px;border-left:1px solid #e8e8e8"></div>
<svg style="left:991px;top:268px" width="10" height="7" viewBox="0 0 10 7"><path d="M0.5 6.5 L5 0.5 L9.5 6.5 Z" fill="#707070"/></svg>
<div class="ab" style="left:991px;top:280px;width:9px;height:600px;background:#6e6e6e;border-radius:4.5px"></div>
<div class="ab" style="left:1006px;top:264px;width:1px;height:601px;background:#d6d6d6"></div>
<div class="t" style="left:1021px;top:282px;font-size:15.5px;line-height:16px;font-weight:bold;color:#262626">eCopilot</div>
<svg style="left:1300px;top:281px" width="16" height="10" viewBox="0 0 16 10"><path d="M1 1 L8 8.5 L15 1" fill="none" stroke="#333" stroke-width="1.1"/></svg>
<svg style="left:1335px;top:281px" width="12" height="12" viewBox="0 0 12 12"><path d="M0.5 0.5 L11.5 11.5 M11.5 0.5 L0.5 11.5" stroke="#333" stroke-width="1.1"/></svg>
<div class="ab" style="left:1020px;top:307px;width:331px;height:600px;background:#fff;border:1px solid #dcdcdc"></div>
<div class="ab" style="left:1334px;top:308.5px;width:17px;height:44px;background:#fff;border:1px solid #dcdcdc;border-right:none"></div>
<svg style="left:1340px;top:325px" width="6" height="9" viewBox="0 0 6 9"><path d="M5 0.5 L1 4.5 L5 8.5" fill="none" stroke="#333" stroke-width="1"/></svg>
<svg style="left:1042px;top:326px" width="10" height="13" viewBox="0 0 10 13"><path d="M9 0.5 L1.8 6.5 L9 12.5" fill="none" stroke="#111" stroke-width="2.2"/></svg>
<div class="t" style="left:1154px;top:327px;font-size:17px;line-height:17px;font-weight:bold;color:#111">生成公式</div>
<div class="ab" style="left:1045.5px;top:328px;width:280px;height:48px;background:#f0f9eb;border:1px solid #e1f3d8;border-radius:4px"></div>
<svg style="left:1067px;top:345px" width="15" height="15" viewBox="0 0 15 15"><circle cx="7.5" cy="7.5" r="7.2" fill="#67c23a"/><path d="M4.2 7.6 L6.6 9.9 L10.8 5.4" fill="none" stroke="#fff" stroke-width="1.5"/></svg>
<div class="t" style="left:1093px;top:346px;font-size:14px;line-height:14px;color:#67c23a">公式插入成功</div>
<svg style="left:1296px;top:347px" width="11" height="11" viewBox="0 0 11 11"><path d="M0.5 0.5 L10.5 10.5 M10.5 0.5 L0.5 10.5" stroke="#b8c0c8" stroke-width="1.1"/></svg>
<div class="t" style="left:1041px;top:378px;font-size:14px;line-height:14px;font-weight:500;color:#1f1f1f">所选区域</div>
<div class="ab" style="left:1041px;top:412px;width:289px;height:32px;background:#fff;border:1px solid #dcdfe6;border-radius:4px"></div>
<div class="t" style="left:1057px;top:421px;font-size:13px;line-height:13px;color:#606266">I10</div>
<div class="t" style="left:1042px;top:472px;font-size:13px;line-height:13px;color:#f56c6c">*</div>
<div class="t" style="left:1052px;top:471.5px;font-size:14px;line-height:14px;font-weight:bold;color:#1f1f1f">提示词</div>
<svg style="left:1097.5px;top:472px" width="14" height="14" viewBox="0 0 14 14"><circle cx="7" cy="7" r="6.6" fill="#ee2233"/><path d="M7 3.2 V8" stroke="#fff" stroke-width="1.8" stroke-linecap="round"/><circle cx="7" cy="10.6" r="1" fill="#fff"/></svg>
<div class="ab" style="left:1041px;top:504px;width:289px;height:110px;background:#fff;border:1px solid #dcdfe6;border-radius:4px"></div>
<div class="t" style="left:1057.5px;top:512.5px;font-size:12.5px;line-height:14px;letter-spacing:1.05px;color:#606266">先求和，再算平均值</div>
<svg style="left:1319px;top:603px" width="9" height="9" viewBox="0 0 9 9"><path d="M8 1 L1 8 M8 5 L5 8" stroke="#777" stroke-width="0.9"/></svg>
<div class="ab" style="left:1041px;top:632px;width:289px;height:31.5px;border-radius:4px;background:linear-gradient(90deg,#26c6fd,#1f55f6)"></div>
<div class="t" style="left:1041px;top:642px;width:289px;text-align:center;font-size:12.2px;line-height:13px;font-weight:bold;color:#fff">生成中</div>
<div class="ab" style="left:1041px;top:674px;width:289px;height:31.5px;border-radius:4px;background:#b4b4b4"></div>
<div class="t" style="left:1041px;top:684px;width:289px;text-align:center;font-size:12.2px;line-height:13px;font-weight:bold;color:#fff">撤销</div>
<div class="t" style="left:1042px;top:720px;font-size:13px;line-height:13px;font-weight:bold;color:#1f1f1f">公式</div>
<div class="ab" style="left:1041px;top:740.5px;width:232.5px;height:31.5px;background:#f5f7fa;border:1px solid #e4e7ed;border-radius:4px"></div>
<div class="t" style="left:1057px;top:747px;font-size:13.1px;line-height:15px;color:#c0c4cc">=SUM(I2:I8)/COUNT(I2:I8)</div>
<div class="ab" style="left:1274px;top:740px;width:56px;height:32px;background:#85ce61;border-radius:4px"></div>
<div class="t" style="left:1274px;top:750px;width:56px;text-align:center;font-size:12px;line-height:12px;font-weight:bold;color:#fff">插入</div>
<svg style="left:0;top:0" width="1355" height="865" viewBox="0 0 1355 865"><path d="M1286.7 770.3 L1284.6 788 L1281 786 L1229.4 857.5 L1275.5 781.2 L1271.3 780 Z" fill="#fe3333"/></svg>
</body></html>
